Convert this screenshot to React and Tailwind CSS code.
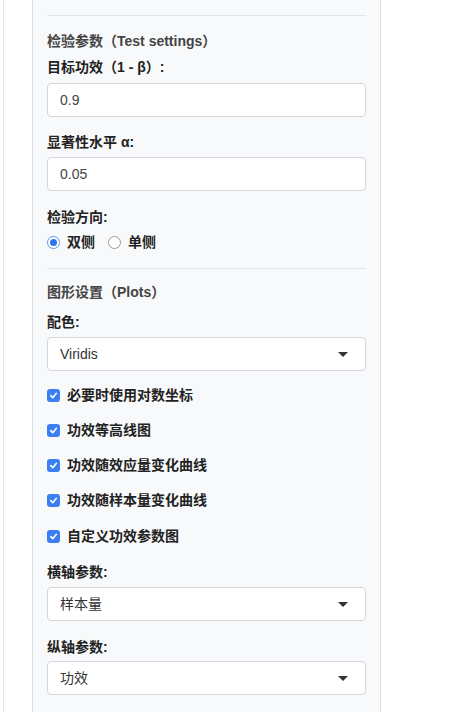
import React from 'react';

const font = { fontFamily: '"Liberation Sans", "Noto Sans CJK SC", sans-serif' };

const Label = ({ children, className = '' }) => (
  <div className={`h-5 leading-5 text-[14px] font-bold text-[#222] ${className}`}>{children}</div>
);

const Heading = ({ children, className = '' }) => (
  <div className={`h-5 leading-5 text-[14px] font-semibold text-[#444] ${className}`}>{children}</div>
);

const TextInput = ({ value, className = '' }) => (
  <div className={`h-[34px] bg-white border border-[#d4d7db] rounded-[4px] px-3 flex items-center text-[14px] text-[#444] ${className}`}>
    {value}
  </div>
);

const Select = ({ value, className = '' }) => (
  <div className={`h-[34px] bg-white border border-[#d4d7db] rounded-[4px] pl-3 pr-[17px] flex items-center justify-between text-[14px] text-[#333] ${className}`}>
    <span>{value}</span>
    <svg width="10" height="5" viewBox="0 0 10 5">
      <path d="M0 0 L10 0 L5 5 Z" fill="#333" />
    </svg>
  </div>
);

const Checkbox = ({ label, className = '' }) => (
  <div className={`h-5 flex items-center gap-[7px] ${className}`}>
    <span className="w-[13px] h-[13px] rounded-[3px] bg-[#3b7ff2] flex items-center justify-center">
      <svg width="9" height="9" viewBox="0 0 10 10">
        <path d="M2 5.2 L4.2 7.4 L8.2 2.6" fill="none" stroke="#fff" strokeWidth="1.8" strokeLinecap="round" strokeLinejoin="round" />
      </svg>
    </span>
    <span className="text-[14px] font-bold text-[#222]">{label}</span>
  </div>
);

const Radio = ({ label, checked }) => (
  <div className="flex items-center gap-[7px]">
    {checked ? (
      <span className="w-[13px] h-[13px] rounded-full border-[1.5px] border-[#5b93f5] bg-white flex items-center justify-center">
        <span className="w-[7px] h-[7px] rounded-full bg-[#2f74ef]" />
      </span>
    ) : (
      <span className="w-[13px] h-[13px] rounded-full border border-[#9a9a9a] bg-white" />
    )}
    <span className="text-[14px] font-bold text-[#222]">{label}</span>
  </div>
);

export default function App() {
  return (
    <div className="w-[460px] h-[712px] bg-white flex overflow-hidden" style={font}>
      <div className="w-[3px]" />
      <div className="w-px bg-[#e6e6e6]" />
      <div className="w-[349px] ml-[28px] bg-[#f8f9fa] border-x border-[#dcdfe3] px-[14px] pt-[15px] flex flex-col">
        <div className="border-t border-[#e3e5e8]" />
        <Heading className="mt-[15px]">检验参数（Test settings）</Heading>
        <Label className="mt-[6px]">目标功效（1 - β）:</Label>
        <TextInput value="0.9" className="mt-[6px]" />
        <Label className="mt-[15px]">显著性水平 α:</Label>
        <TextInput value="0.05" className="mt-[5px]" />
        <Label className="mt-[16px]">检验方向:</Label>
        <div className="h-5 mt-[5px] flex items-center gap-[13px]">
          <Radio label="双侧" checked />
          <Radio label="单侧" />
        </div>
        <div className="border-t border-[#e3e5e8] mt-[16px]" />
        <Heading className="mt-[13px]">图形设置（Plots）</Heading>
        <Label className="mt-[10px]">配色:</Label>
        <Select value="Viridis" className="mt-[5px]" />
        <Checkbox label="必要时使用对数坐标" className="mt-[14px]" />
        <Checkbox label="功效等高线图" className="mt-[15px]" />
        <Checkbox label="功效随效应量变化曲线" className="mt-[15px]" />
        <Checkbox label="功效随样本量变化曲线" className="mt-[15px]" />
        <Checkbox label="自定义功效参数图" className="mt-[16px]" />
        <Label className="mt-[16px]">横轴参数:</Label>
        <Select value="样本量" className="mt-[5px]" />
        <Label className="mt-[16px]">纵轴参数:</Label>
        <Select value="功效" className="mt-[4px]" />
      </div>
    </div>
  );
}
